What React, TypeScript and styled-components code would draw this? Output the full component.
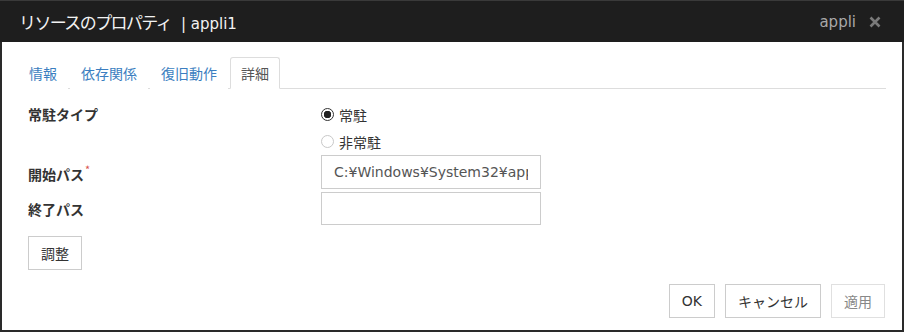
import styled, { createGlobalStyle } from "styled-components";

const GlobalStyle = createGlobalStyle`
  html, body {
    margin: 0;
    padding: 0;
    background: #ffffff;
  }
  * {
    box-sizing: border-box;
  }
  body {
    font-family: "DejaVu Sans", "Noto Sans CJK JP", sans-serif;
    color: #333;
  }
`;

const tabs = ["情報", "依存関係", "復旧動作", "詳細"];

const App = () => {
  return (
    <>
      <GlobalStyle />
      <Dialog>
        <TitleBar>
          <Title>
            <Kana>リソースのプロパティ</Kana> | appli1
          </Title>
          <TitleRight>
            <Resource>appli</Resource>
            <CloseIcon viewBox="0 0 12 12" aria-hidden="true">
              <path d="M1.5 1.5 L10.5 10.5 M10.5 1.5 L1.5 10.5" />
            </CloseIcon>
          </TitleRight>
        </TitleBar>
        <Body>
          <TabList>
            {tabs.map((t, i) => (
              <Tab key={t} $active={i === tabs.length - 1}>
                {t}
              </Tab>
            ))}
          </TabList>
          <Form>
            <FieldRow>
              <Label $top>常駐タイプ</Label>
              <RadioGroup>
                <RadioRow>
                  <RadioMark $checked />
                  常駐
                </RadioRow>
                <RadioRow>
                  <RadioMark />
                  非常駐
                </RadioRow>
              </RadioGroup>
            </FieldRow>
            <FieldRow>
              <Label>
                開始パス<Required>*</Required>
              </Label>
              <TextInput readOnly value="C:¥Windows¥System32¥appli.exe" />
            </FieldRow>
            <FieldRow $gap={3}>
              <Label>終了パス</Label>
              <TextInput readOnly value="" $short />
            </FieldRow>
          </Form>
          <AdjustRow>
            <Button>調整</Button>
          </AdjustRow>
          <Footer>
            <Button>OK</Button>
            <Button>キャンセル</Button>
            <Button $disabled>適用</Button>
          </Footer>
        </Body>
      </Dialog>
    </>
  );
};

const Dialog = styled.div`
  width: 904px;
  height: 332px;
  border: 2px solid #2a2a2a;
  border-top: 0;
  display: flex;
  flex-direction: column;
  background: #fff;
`;

const TitleBar = styled.div`
  height: 42px;
  background: #1e1e1e;
  border-top: 1px solid #3a3a3a;
  display: flex;
  align-items: center;
  justify-content: space-between;
  margin: 0 -2px;
  padding: 0 23px 0 19px;
`;

const Title = styled.h1`
  margin: 0;
  font-family: "DejaVu Sans", sans-serif;
  font-size: 15px;
  font-weight: 400;
  color: #f2f2f2;
  white-space: pre;
`;

const Kana = styled.span`
  font-family: "Noto Sans CJK JP", sans-serif;
  font-size: 17px;
  letter-spacing: -1.6px;
  margin-right: 5px;
`;

const TitleRight = styled.div`
  display: flex;
  align-items: center;
  gap: 13px;
`;

const Resource = styled.span`
  font-family: "DejaVu Sans", sans-serif;
  font-size: 15px;
  color: #a8a8a8;
`;

const CloseIcon = styled.svg`
  width: 12px;
  height: 12px;
  stroke: #7a7a7a;
  stroke-width: 2.6;
  fill: none;
`;

const Body = styled.div`
  flex: 1;
  display: flex;
  flex-direction: column;
  padding: 15px 16px 12px 16px;
`;

const TabList = styled.div`
  display: flex;
  gap: 2px;
  border-bottom: 1px solid #dddddd;
  height: 32px;
`;

const Tab = styled.div<{ $active?: boolean }>`
  height: 32px;
  padding: 0 10px;
  display: flex;
  align-items: center;
  font-family: "Noto Sans CJK JP", sans-serif;
  font-size: 14px;
  color: ${(p) => (p.$active ? "#555" : "#3b7ec0")};
  background: #fff;
  border: 1px solid ${(p) => (p.$active ? "#dddddd" : "transparent")};
  border-bottom-color: ${(p) => (p.$active ? "#fff" : "transparent")};
  border-radius: 3px 3px 0 0;
`;

const Form = styled.div`
  display: flex;
  flex-direction: column;
  padding-left: 10px;
  margin-top: 12px;
`;

const FieldRow = styled.div<{ $gap?: number }>`
  display: grid;
  grid-template-columns: 293px 220px;
  align-items: center;
  margin-top: ${(p) => p.$gap ?? 0}px;
`;

const Label = styled.div<{ $top?: boolean }>`
  font-family: "Noto Sans CJK JP", sans-serif;
  font-size: 14px;
  font-weight: 700;
  color: #333;
  align-self: ${(p) => (p.$top ? "start" : "center")};
  line-height: ${(p) => (p.$top ? "27px" : "normal")};
`;

const Required = styled.sup`
  color: #d9534f;
  font-size: 11px;
  font-weight: 400;
  vertical-align: 6px;
  margin-left: 1px;
`;

const RadioGroup = styled.div`
  display: flex;
  flex-direction: column;
`;

const RadioRow = styled.label`
  display: flex;
  align-items: center;
  gap: 5px;
  height: 27px;
  font-family: "Noto Sans CJK JP", sans-serif;
  font-size: 14px;
  color: #333;
`;

const RadioMark = styled.span<{ $checked?: boolean }>`
  width: 13px;
  height: 13px;
  border-radius: 50%;
  border: 1px solid ${(p) => (p.$checked ? "#333" : "#c8c8c8")};
  background: ${(p) =>
    p.$checked ? "radial-gradient(circle, #222 0 3.5px, #fff 4px)" : "#fff"};
`;

const TextInput = styled.input<{ $short?: boolean }>`
  width: 220px;
  height: ${(p) => (p.$short ? 33 : 34)}px;
  border: 1px solid #cccccc;
  padding: 0 12px;
  font-family: "DejaVu Sans", "Noto Sans CJK JP", sans-serif;
  font-size: 14px;
  color: #555;
  outline: none;
`;

const AdjustRow = styled.div`
  padding-left: 10px;
  margin-top: 11px;
`;

const Button = styled.button<{ $disabled?: boolean }>`
  height: 34px;
  padding: 0 12px;
  background: #fff;
  border: 1px solid ${(p) => (p.$disabled ? "#e0e0e0" : "#cccccc")};
  border-radius: 0;
  font-family: "DejaVu Sans", "Noto Sans CJK JP", sans-serif;
  font-size: 14px;
  color: ${(p) => (p.$disabled ? "#888" : "#333")};
`;

const Footer = styled.div`
  margin-top: auto;
  display: flex;
  justify-content: flex-end;
  gap: 10px;
  padding-right: 1px;
`;

export default App;
